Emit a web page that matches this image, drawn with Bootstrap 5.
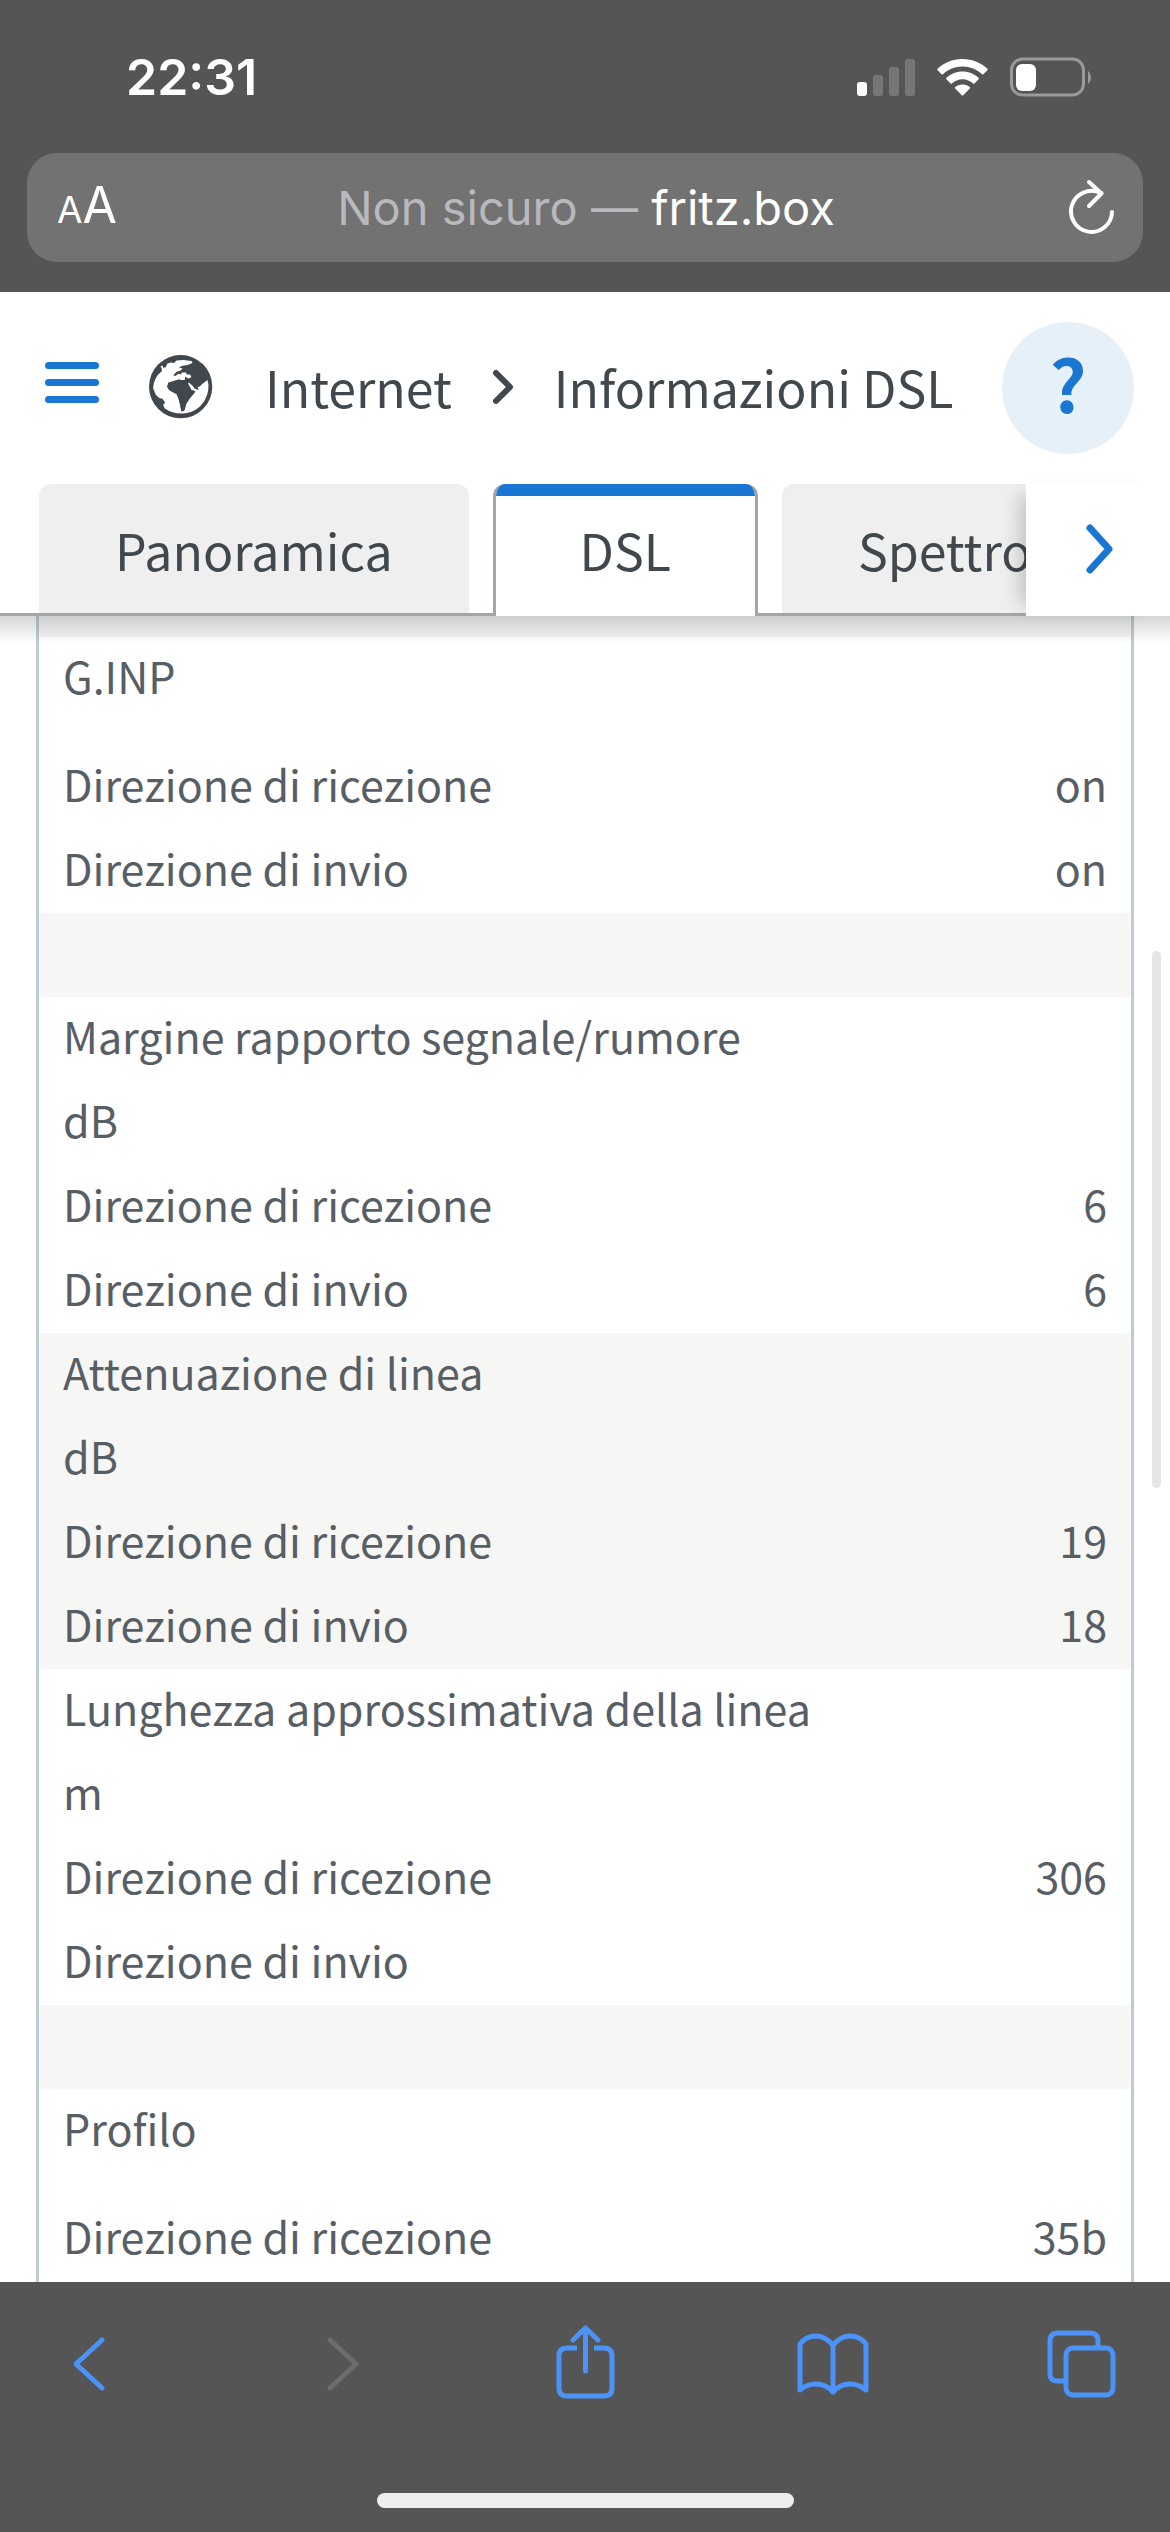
<!DOCTYPE html>
<html lang="it">
<head>
<meta charset="utf-8">
<meta name="viewport" content="width=device-width, initial-scale=1">
<title>FRITZ!Box – Informazioni DSL</title>
<link href="https://cdn.jsdelivr.net/npm/bootstrap@5.3.0/dist/css/bootstrap.min.css" rel="stylesheet">
<style>
  :root { --chrome: #555555; --accent: #1976d2; --ios: #4b93f8; --ink: #41484d; --soft: #575e65; --rule: #a2a6a6; --stripe: #f6f6f5; }
  body { font-family: "Noto Sans CJK SC", "Noto Sans", sans-serif; color: var(--soft); background: #fff; }
  svg { display: block; }
  .chrome { background: var(--chrome); color: #fff; font-family: Inter, "Liberation Sans", sans-serif; }
  .status { height: 153px; padding: 0 78px 0 126px; }
  .clock { font-size: 50px; font-weight: 600; line-height: 60px; }
  .wifi { margin: 0 22px; }
  .urlbar { height: 109px; margin: 0 27px 30px; padding: 0 28px 0 30px; background: #727272; border-radius: 30px; }
  .urlbar .url { font-size: 47px; line-height: 60px; color: #fff; }
  .urlbar .muted { color: #b8b8bd; }
  .urlbar .side { width: 62px; }
  .plain { background: none; border: 0; padding: 0; color: inherit; }
  .size-small { font-size: 37px; }
  .size-big { font-size: 50px; }
  .size-small, .size-big { line-height: 60px; }

  .crumbbar { height: 192px; padding: 0 36px 0 45px; color: var(--ink); font-size: 50px; }
  .crumbbar a { color: inherit; text-decoration: none; line-height: 72px; padding-bottom: 4px; }
  .help { width: 132px; height: 132px; border-radius: 50%; background: #e5f0f9; color: var(--accent); font-size: 72px; font-weight: 700; line-height: 120px; padding-bottom: 12px; }

  .tabbar { height: 132px; }
  .tabclip { overflow: hidden; }
  .tablist { height: 132px; min-width: 100%; width: max-content; padding-left: 39px; gap: 24px; border-bottom: 3px solid var(--rule); }
  .tab { display: block; height: 129px; padding: 20px 76px 0; line-height: 90px; font-size: 50px; color: var(--ink); background: #efefef; border-radius: 12px 12px 0 0; text-decoration: none; white-space: nowrap; }
  .tab.current { height: 132px; padding: 20px 84px 0; background: #fff; border: 3px solid var(--rule); border-width: 0 3px; position: relative; overflow: hidden; }
  .tab.current::before { content: ""; position: absolute; top: 0; left: -3px; right: -3px; height: 12px; background: var(--accent); }
  .tabnext { width: 144px; background: #fff; color: var(--accent); z-index: 1; box-shadow: -18px 0 18px -12px rgba(0,0,0,.2); }

  .page { position: relative; padding: 0 36px; }
  .page::before { content: ""; position: absolute; left: 0; right: 0; top: 0; height: 27px; background: linear-gradient(rgba(60,65,70,.22), rgba(60,65,70,0)); }
  .frame { border: 3px solid #bdcbd2; border-width: 0 3px; }
  .thumb { position: absolute; right: 9px; top: 335px; width: 9px; height: 537px; border-radius: 5px; background: #e5e5e5; }
  .dsl { width: 100%; font-size: 43px; line-height: 76px; }
  .dsl th, .dsl td { font-weight: 400; padding: 0 24px 8px; }
  .dsl .tall th { padding-bottom: 32px; }
  .dsl .alt { background: var(--stripe); }
  .dsl .blank td { height: 84px; padding: 0; }
  .dsl .lead-in td { height: 21px; padding: 0; }

  .toolbar { height: 250px; padding: 39px 53px 24px; color: var(--ios); }
  .homebar { width: 417px; height: 15px; border-radius: 8px; background: #eee; }
</style>
<script src="https://cdn.jsdelivr.net/npm/bootstrap@5.3.0/dist/js/bootstrap.bundle.min.js" defer></script>
</head>
<body class="d-flex flex-column min-vh-100">

<header class="chrome">
  <div class="status d-flex align-items-center justify-content-between">
    <span class="clock">22:31</span>
    <div class="d-flex align-items-center">
      <svg width="58" height="38" viewBox="0 0 58 38" fill="#777"><rect y="24" width="10" height="14" rx="3" fill="#fff"/><rect x="16" y="17" width="10" height="21" rx="3"/><rect x="32" y="9" width="10" height="29" rx="3"/><rect x="48" y="1" width="10" height="37" rx="3"/></svg>
      <svg class="wifi" width="51" height="38" viewBox="0 0 51 38" fill="#fff"><path d="M25.500 1C15.500 1 6.500 5 0.600 10.800Q0 11.500 0.600 12.200L4.600 16.200Q5.200 16.700 5.900 16.200C11 11.300 18 8.400 25.500 8.400S40 11.300 45.100 16.200Q45.800 16.700 46.400 16.200L50.400 12.200Q51 11.500 50.400 10.800C44.500 5 35.500 1 25.500 1Z"/><path d="M25.500 13.500C19 13.500 13.500 16 9.400 19.800Q8.800 20.500 9.400 21.200L13.600 25.400Q14.200 25.900 14.900 25.400C17.700 22.900 21.400 21.200 25.500 21.200S33.300 22.900 36.100 25.400Q36.800 25.900 37.400 25.400L41.600 21.200Q42.200 20.500 41.600 19.800C37.500 16 32 13.500 25.500 13.500Z"/><path d="M25.500 26.500C22.500 26.500 20 27.600 18.200 29Q17.600 29.700 18.200 30.400L24.800 37.200Q25.500 37.800 26.200 37.200L32.800 30.400Q33.400 29.700 32.800 29C31 27.600 28.500 26.500 25.500 26.500Z"/></svg>
      <svg width="82" height="40" viewBox="0 0 82 40"><rect x="1.500" y="2" width="72" height="36" rx="11" fill="none" stroke="#9a9a9a" stroke-width="3"/><path d="M78 14C82 17 82 24 78 27Z" fill="#9a9a9a"/><rect x="6" y="7" width="20" height="27" rx="6" fill="#fff"/></svg>
    </div>
  </div>
  <div class="urlbar d-flex align-items-center justify-content-between">
    <button class="plain side d-flex align-items-baseline" aria-label="Dimensione testo"><span class="size-small">A</span><span class="size-big">A</span></button>
    <span class="url"><span class="muted">Non sicuro —</span> fritz.box</span>
    <button class="plain side d-flex justify-content-end" aria-label="Ricarica"><svg width="48" height="60" viewBox="0 3 48 60" fill="none" stroke="#fff" stroke-width="4" stroke-linecap="round" stroke-linejoin="round"><path d="M45 37A20.500 20.500 0 1 1 33.500 18L34.500 18"/><path d="M22 7L34.500 18.500L22 31"/></svg></button>
  </div>
</header>

<nav class="crumbbar d-flex align-items-center" aria-label="Percorso">
  <button class="plain" aria-label="Menu"><svg width="54" height="54" viewBox="0 2 54 54" stroke="#1976d2" stroke-width="7" stroke-linecap="round"><path d="M3.500 6.500H50.500M3.500 23.500H50.500M3.500 40.500H50.500"/></svg></button>
  <svg class="ms-5" width="70" height="66" viewBox="18 30 208 196"><circle cx="118" cy="124" r="94" fill="#41484d"/><path fill="#fff" d="M62 70L58 64L64 61L66 68L74 66L78 56L88 52L98 54L106 46L126 45L150 48Q156 52 150 55L138 60L124 62L112 66L124 70L118 76L106 80L96 90L102 92L112 86L118 88L122 82L134 82L136 88L146 88L150 96L140 100L132 94L130 104L120 104L112 102L100 108L90 114L82 112L78 124L84 134L98 142L106 146L112 160L116 176L120 196Q126 200 130 192L134 176L144 160L156 146L162 138L150 134L140 116L142 112L152 120L160 130L172 134L168 124L174 124L182 116L198 104Q206 132 190 164Q166 204 122 204Q92 204 70 188L66 178L72 172L64 160L54 158L44 148L36 128Q38 96 62 78Z"/><path fill="#41484d" d="M82 112L94 108L104 105L124 104L138 112L150 134L162 138L156 146L144 160L134 176L130 192Q126 200 120 196L116 176L112 160L106 146L98 142L84 134L78 124Z"/></svg>
  <a href="#" class="ms-5">Internet</a>
  <svg class="mx-4" width="54" height="72" viewBox="-3 -1 54 72" fill="none" stroke="#41484d" stroke-width="6" stroke-linecap="round" stroke-linejoin="round"><path d="M17 20L31 34L17 48"/></svg>
  <a href="#" aria-current="page">Informazioni DSL</a>
  <button class="plain help ms-auto flex-shrink-0" aria-label="Aiuto">?</button>
</nav>

<div class="tabbar d-flex">
  <div class="tabclip flex-grow-1">
    <nav class="tablist d-flex" aria-label="Schede">
      <a class="tab" href="#">Panoramica</a>
      <a class="tab current" href="#" aria-current="true">DSL</a>
      <a class="tab" href="#">Spettro</a>
    </nav>
  </div>
  <button class="plain tabnext d-flex align-items-center justify-content-center flex-shrink-0" aria-label="Schede successive"><svg width="48" height="60" viewBox="-1 -1 48 60" fill="none" stroke="#1976d2" stroke-width="7" stroke-linecap="round" stroke-linejoin="round"><path d="M15 7L34 28L15 49"/></svg></button>
</div>

<main class="page flex-grow-1 d-flex flex-column">
  <div class="frame flex-grow-1">
    <table class="dsl">
      <tbody class="alt"><tr class="lead-in"><td colspan="2"></td></tr></tbody>
      <tbody>
        <tr class="tall"><th colspan="2">G.INP</th></tr>
        <tr><th scope="row">Direzione di ricezione</th><td class="text-end">on</td></tr>
        <tr><th scope="row">Direzione di invio</th><td class="text-end">on</td></tr>
      </tbody>
      <tbody class="alt"><tr class="blank"><td colspan="2"></td></tr></tbody>
      <tbody>
        <tr><th colspan="2">Margine rapporto segnale/rumore</th></tr>
        <tr><td colspan="2">dB</td></tr>
        <tr><th scope="row">Direzione di ricezione</th><td class="text-end">6</td></tr>
        <tr><th scope="row">Direzione di invio</th><td class="text-end">6</td></tr>
      </tbody>
      <tbody class="alt">
        <tr><th colspan="2">Attenuazione di linea</th></tr>
        <tr><td colspan="2">dB</td></tr>
        <tr><th scope="row">Direzione di ricezione</th><td class="text-end">19</td></tr>
        <tr><th scope="row">Direzione di invio</th><td class="text-end">18</td></tr>
      </tbody>
      <tbody>
        <tr><th colspan="2">Lunghezza approssimativa della linea</th></tr>
        <tr><td colspan="2">m</td></tr>
        <tr><th scope="row">Direzione di ricezione</th><td class="text-end">306</td></tr>
        <tr><th scope="row">Direzione di invio</th><td></td></tr>
      </tbody>
      <tbody class="alt"><tr class="blank"><td colspan="2"></td></tr></tbody>
      <tbody>
        <tr class="tall"><th colspan="2">Profilo</th></tr>
        <tr><th scope="row">Direzione di ricezione</th><td class="text-end">35b</td></tr>
      </tbody>
    </table>
  </div>
  <div class="thumb"></div>
</main>

<footer class="chrome toolbar d-flex flex-column justify-content-between align-items-center">
  <div class="d-flex align-items-center justify-content-between w-100">
    <button class="plain" aria-label="Indietro"><svg width="72" height="84" viewBox="-6 0 72 84" fill="none" stroke="#4b93f8" stroke-width="5" stroke-linecap="round" stroke-linejoin="round"><path d="M43 19L17 43L43 67"/></svg></button>
    <button class="plain" aria-label="Avanti" disabled><svg width="72" height="84" viewBox="-12 0 72 84" fill="none" stroke="#6c6c6c" stroke-width="5" stroke-linecap="round" stroke-linejoin="round"><path d="M17 19L43 43L17 67"/></svg></button>
    <button class="plain" aria-label="Condividi"><svg width="72" height="84" viewBox="-6 0 72 84" fill="none" stroke="#4b93f8" stroke-width="5" stroke-linecap="round" stroke-linejoin="round"><path stroke-linecap="butt" d="M22 27H12Q4 27 4 35V67Q4 75 12 75H49Q57 75 57 67V35Q57 27 49 27H39"/><path d="M30.500 50V7M18 19L30.500 7L43 19"/></svg></button>
    <button class="plain" aria-label="Preferiti"><svg width="72" height="84" viewBox="2 0 72 84" fill="none" stroke="#4b93f8" stroke-width="5" stroke-linecap="round" stroke-linejoin="round"><path d="M38 24Q30 15 21 15Q11 15 5 23V69Q12 63 21 63Q31 63 38 71Q45 63 55 63Q64 63 71 69V23Q65 15 55 15Q46 15 38 24V71"/></svg></button>
    <button class="plain" aria-label="Schede aperte"><svg width="72" height="84" viewBox="0 0 72 84" fill="none" stroke="#4b93f8" stroke-width="5"><rect x="21" y="27" width="47" height="47" rx="7"/><path d="M21 60H13Q5 60 5 53V20Q5 12 13 12H45Q53 12 53 20V27"/></svg></button>
  </div>
  <div class="homebar"></div>
</footer>
</body>
</html>
